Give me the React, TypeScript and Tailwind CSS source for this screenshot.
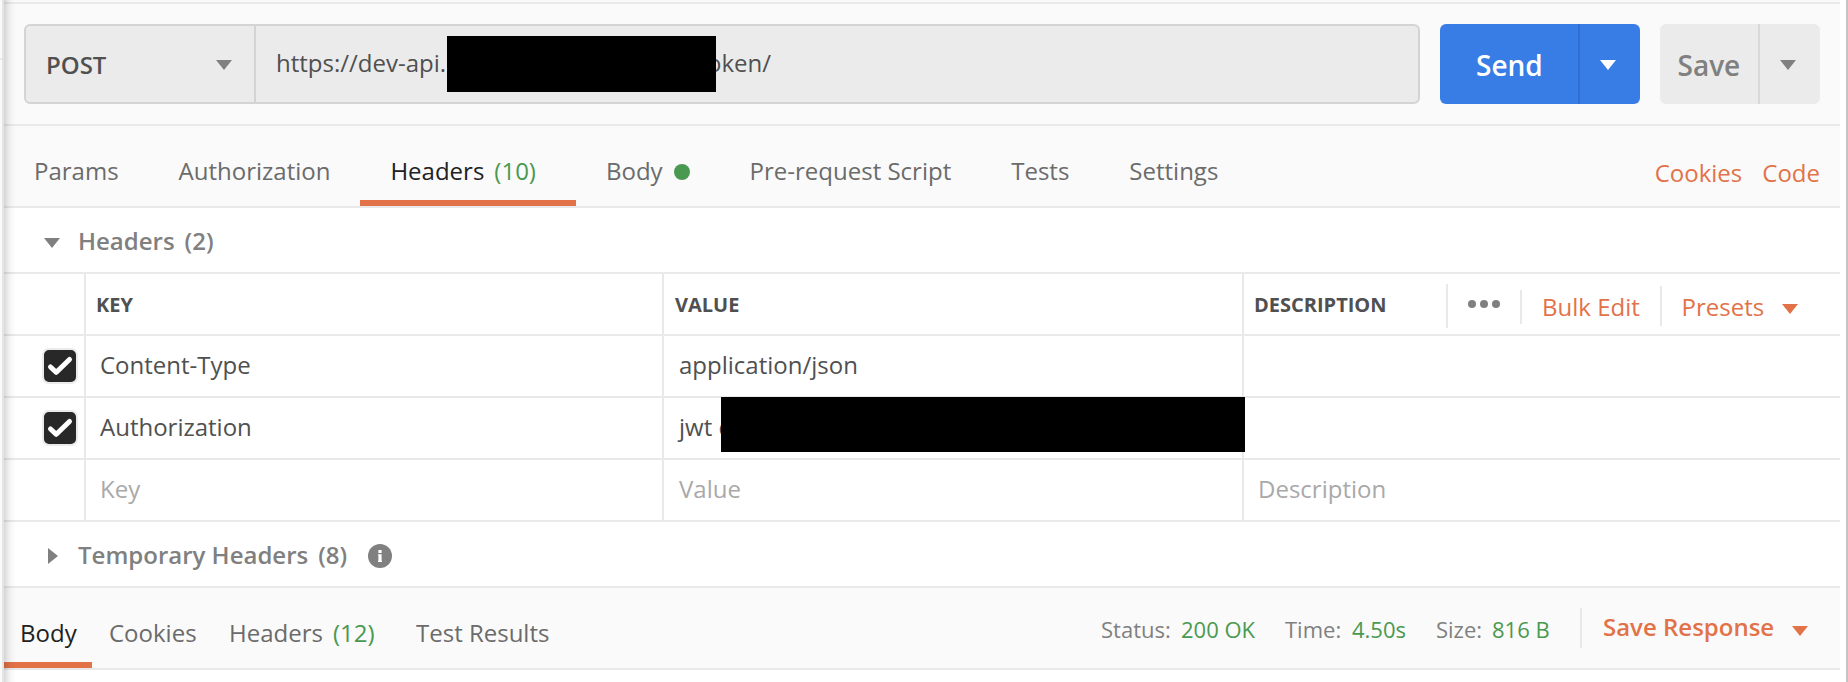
import type { ReactNode } from "react";

function Caret({ className = "" }: { className?: string }) {
  return (
    <svg width="16" height="10" viewBox="0 0 16 10" className={`shrink-0 ${className}`} fill="currentColor">
      <path d="M0 0H16L8 10Z" />
    </svg>
  );
}

function Tab({ children, active = false }: { children: ReactNode; active?: boolean }) {
  return (
    <div
      className={`flex h-20 pl-[30px] pt-[29px] leading-8 whitespace-pre ${
        active ? "border-b-6 border-[#e27248] pr-10 text-[#212121]" : "pr-[30px] text-[#6b6b6b]"
      }`}
    >
      {children}
    </div>
  );
}

function Checkbox() {
  return (
    <div className="ml-[38px] mt-[12px] h-9 w-9 rounded-[7px] border-2 border-[#ebebeb] bg-[#282828]">
      <svg width="32" height="32" viewBox="0 0 32 32" fill="none" stroke="#fff" strokeWidth="5" strokeLinecap="round" strokeLinejoin="round">
        <path d="M6.5 17L12.3 22.3L25.5 9.5" />
      </svg>
    </div>
  );
}

function Row({ first, cells, muted = false }: { first?: ReactNode; cells: ReactNode[]; muted?: boolean }) {
  return (
    <div
      className={`grid h-[62px] grid-cols-[80px_578px_580px_1fr] border-b-2 border-[#e9e9e9] leading-8 ${
        muted ? "text-[#a9a9a9]" : "text-[#505050]"
      }`}
    >
      <div>{first}</div>
      {cells.map((cell, i) => (
        <div
          key={i}
          className={`relative border-l-2 border-[#e9e9e9] pt-[13px] whitespace-pre ${i === 1 ? "pl-[15px]" : "pl-[14px]"}`}
        >
          {cell}
        </div>
      ))}
    </div>
  );
}

export default function App() {
  return (
    <div className="relative flex h-[682px] w-[1848px] overflow-hidden bg-white font-['Open_Sans',sans-serif] text-[24px] text-[#505050]">
      <div className="w-1 shrink-0 border-r-2 border-[#e4e4e4] bg-[#fafafa]">
        <div className="mt-[58px] h-[2px] bg-[#e9e9e9]" />
      </div>
      <main className="w-[1836px] shrink-0">
        <section className="h-[126px] border-b-2 border-[#e9e9e9] bg-[#fafafa] pt-[2px]">
          <div className="h-[2px] bg-[#e9e9e9]" />
          <div className="mt-5 flex h-20 pl-5">
            <div className="flex w-[1396px] rounded-[6px] border-2 border-[#d4d4d4] bg-[#ebebeb]">
              <div className="flex w-[230px] items-start justify-between border-r-2 border-[#d4d4d4] pl-5 pr-[22px] pt-[23px] font-semibold leading-8">
                POST
                <Caret className="mt-[11px] text-[#808080]" />
              </div>
              <div className="relative pl-5 pt-[20.5px] leading-8">
                https://dev-api.
                <div className="absolute left-[191px] top-[10px] z-10 h-14 w-[269px] bg-black" />
                <span className="absolute left-[451px] top-[20.5px]">oken/</span>
              </div>
            </div>
            <div className="ml-5 flex w-[200px] overflow-hidden rounded-[6px] bg-[#387ce6] font-semibold text-white">
              <div className="w-[140px] border-r-2 border-[#316ecf] pl-[36px] pt-[23px] text-[28px] leading-9">Send</div>
              <Caret className="ml-5 mt-9" />
            </div>
            <div className="ml-5 flex w-40 overflow-hidden rounded-[6px] bg-[#ebebeb] font-semibold text-[#808080]">
              <div className="w-[100px] border-r-2 border-[#d9d9d9] pl-[17.5px] pt-[23px] text-[28px] leading-9">Save</div>
              <Caret className="ml-5 mt-9" />
            </div>
          </div>
        </section>

        <nav className="flex h-[82px] border-b-2 border-[#e9e9e9] bg-[#fafafa]">
          <Tab>Params</Tab>
          <Tab>Authorization</Tab>
          <Tab active>
            Headers<span className="ml-[10px] text-[#4a9950]">(10)</span>
          </Tab>
          <Tab>
            Body<span className="ml-[11px] mt-[9px] h-4 w-4 rounded-full bg-[#4a9950]" />
          </Tab>
          <Tab>Pre-request Script</Tab>
          <Tab>Tests</Tab>
          <Tab>Settings</Tab>
          <div className="ml-auto flex gap-5 pr-5 pt-[31px] leading-8 text-[#e27248]">
            <span>Cookies</span>
            <span>Code</span>
          </div>
        </nav>

        <section>
          <div className="flex h-[66px] border-b-2 border-[#e9e9e9] pl-10 pt-[17px] font-semibold leading-8 text-[#808080]">
            <Caret className="mt-[13px]" />
            <span className="ml-[18px]">Headers</span>
            <span className="ml-[10px]">(2)</span>
          </div>

          <div className="grid h-[62px] grid-cols-[80px_578px_580px_1fr] border-b-2 border-[#e9e9e9] text-[20px] font-bold leading-8">
            <div />
            <div className="border-l-2 border-[#e9e9e9] pl-[10px] pt-[14.5px]">KEY</div>
            <div className="border-l-2 border-[#e9e9e9] pl-[11px] pt-[14.5px]">VALUE</div>
            <div className="flex border-l-2 border-[#e9e9e9] pl-[10px]">
              <span className="w-[192px] pt-[14.5px]">DESCRIPTION</span>
              <div className="mt-[10px] flex h-11 w-[74px] gap-1 border-l-2 border-[#e9e9e9] pl-5 pt-4">
                <i className="h-2 w-2 rounded-full bg-[#808080]" />
                <i className="h-2 w-2 rounded-full bg-[#808080]" />
                <i className="h-2 w-2 rounded-full bg-[#808080]" />
              </div>
              <div className="mt-4 h-[34px] w-[2px] bg-[#e9e9e9]" />
              <span className="w-[138px] pl-5 pt-[17px] text-[24px] font-normal text-[#e27248]">Bulk Edit</span>
              <div className="mt-3 h-10 w-[2px] bg-[#e9e9e9]" />
              <span className="w-[120px] pl-[19.5px] pt-[17px] text-[24px] font-normal text-[#e27248]">Presets</span>
              <Caret className="mt-[30px] text-[#e27248]" />
            </div>
          </div>

          <Row first={<Checkbox />} cells={["Content-Type", "application/json", ""]} />
          <Row
            first={<Checkbox />}
            cells={[
              "Authorization",
              <>
                jwt c
                <div className="absolute -top-px left-[57px] z-10 h-[55px] w-[524px] bg-black" />
              </>,
              "",
            ]}
          />
          <Row muted cells={["Key", "Value", "Description"]} />

          <div className="flex h-[66px] border-b-2 border-[#e9e9e9] pl-[44px] pt-[17px] font-semibold leading-8 text-[#808080]">
            <svg width="10" height="16" viewBox="0 0 10 16" fill="currentColor" className="mt-[9px]">
              <path d="M0 0V16L10 8Z" />
            </svg>
            <span className="ml-5">Temporary Headers</span>
            <span className="ml-[10px]">(8)</span>
            <svg width="24" height="24" viewBox="0 0 24 24" className="ml-[21px] mt-[5px]">
              <circle cx="12" cy="12" r="12" fill="#808080" />
              <path d="M10.4 6H13.6V9H10.4ZM10 10.2H13.6V16.8H14V18H10V16.8H10.4V11.4H10Z" fill="#fff" />
            </svg>
          </div>
        </section>

        <section className="flex h-[82px] border-b-2 border-[#e9e9e9] bg-[#fafafa] leading-8 text-[#6b6b6b]">
          <div className="h-20 w-[88px] border-b-6 border-[#e27248] pl-4 pt-[29px] text-[#212121]">Body</div>
          <span className="w-[120px] pl-[17px] pt-[29px]">Cookies</span>
          <span className="w-[187px] pl-[17px] pt-[29px]">
            Headers<span className="ml-[10px] text-[#4a9950]">(12)</span>
          </span>
          <span className="pl-[17px] pt-[29px]">Test Results</span>
          <div className="ml-auto flex pt-[25px] text-[22px] text-[#808080]">
            <span className="w-[80px]">Status:</span>
            <span className="w-[104px] text-[#4a9950]">200 OK</span>
            <span className="w-[67px]">Time:</span>
            <span className="w-[84px] text-[#4a9950]">4.50s</span>
            <span className="w-[56px]">Size:</span>
            <span className="w-[88px] text-[#4a9950]">816 B</span>
          </div>
          <div className="mt-5 h-10 w-[2px] bg-[#e9e9e9]" />
          <div className="flex w-[258px] pl-[21px] pt-[23px] font-semibold text-[#e27248]">
            <span className="w-[189px]">Save Response</span>
            <Caret className="mt-[15px]" />
          </div>
        </section>
      </main>
      <div className="ml-auto w-[2px] bg-[#c4c4c4]" />
      <div className="pointer-events-none absolute inset-y-0 left-1 z-20 w-3 bg-linear-to-r from-black/15 via-black/4 to-transparent" />
    </div>
  );
}
